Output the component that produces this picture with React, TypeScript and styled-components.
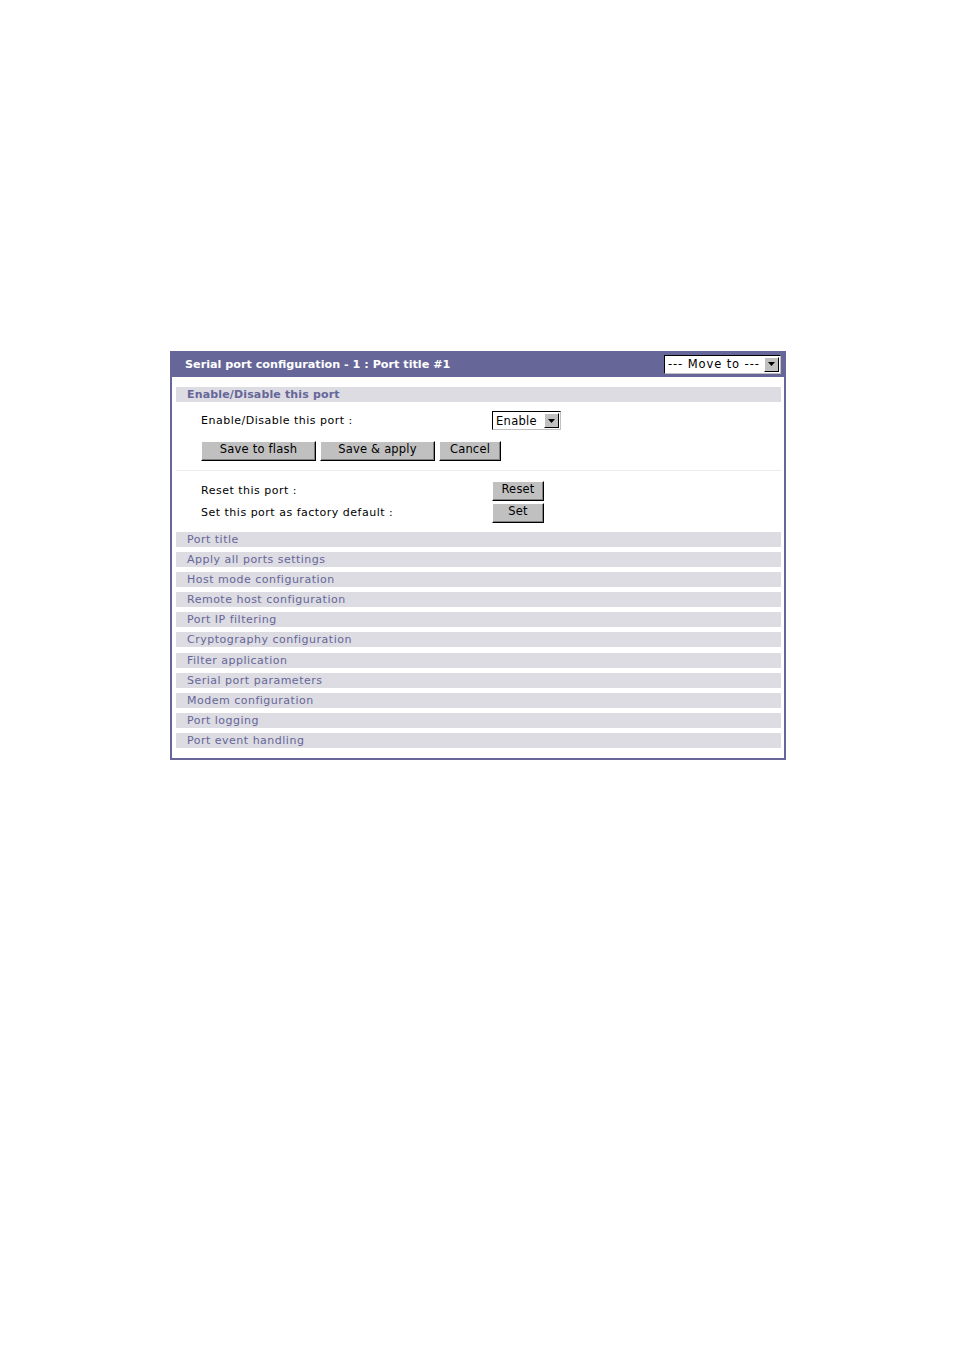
import React from 'react'
import styled, { createGlobalStyle } from 'styled-components'

const GlobalStyle = createGlobalStyle`
  body {
    margin: 0;
    background: #ffffff;
    font-family: "DejaVu Sans", Verdana, sans-serif;
  }
`

const links = [
  'Port title',
  'Apply all ports settings',
  'Host mode configuration',
  'Remote host configuration',
  'Port IP filtering',
  'Cryptography configuration',
  'Filter application',
  'Serial port parameters',
  'Modem configuration',
  'Port logging',
  'Port event handling',
]

const Page = styled.div`
  padding: 351px 0 0 170px;
  min-height: 1000px;
`

const Panel = styled.div`
  width: 612px;
  border: 2px solid #666699;
  border-top: 0;
  background: #ffffff;
`

const Header = styled.div`
  display: flex;
  align-items: center;
  justify-content: space-between;
  height: 26px;
  margin: 0 -2px;
  padding: 0 5px 0 15px;
  background: #666699;
  color: #ffffff;
  font-size: 11.2px;
  font-weight: bold;
`

const Body = styled.div`
  padding: 10px 3px 10px 4px;
`

const SectionBar = styled.div<{ $bold?: boolean }>`
  display: flex;
  align-items: center;
  height: 15px;
  padding-left: 11px;
  background: #dcdce2;
  color: #666699;
  font-size: 11px;
  font-weight: ${(p) => (p.$bold ? 'bold' : 'normal')};
  letter-spacing: ${(p) => (p.$bold ? '0.15px' : '0.5px')};
  white-space: nowrap;
`

const LinkList = styled.div`
  display: flex;
  flex-direction: column;
  gap: 5.1px;
`

const Form = styled.div<{ $top?: number }>`
  padding: ${(p) => p.$top ?? 0}px 0 0 25px;
`

const Row = styled.div<{ $h: number }>`
  display: grid;
  grid-template-columns: 291px auto;
  align-items: center;
  height: ${(p) => p.$h}px;
  font-size: 11px;
  letter-spacing: 0.5px;
  color: #000000;
`

const ButtonRow = styled.div`
  display: flex;
  gap: 4px;
  margin: 11px 0 9px;
`

const Separator = styled.div`
  height: 1px;
  background: #ececec;
  margin-bottom: 9px;
`

const Button = styled.button<{ $w: number; $h?: number }>`
  box-sizing: border-box;
  width: ${(p) => p.$w}px;
  height: ${(p) => p.$h ?? 20}px;
  padding: 0 0 2px;
  background: #c0c0c0;
  border: 1px solid;
  border-color: #ffffff #000000 #000000 #ffffff;
  box-shadow: inset -1px -1px 0 #808080;
  font-family: "DejaVu Sans", Verdana, sans-serif;
  font-size: 11.5px;
  letter-spacing: 0.2px;
  color: #000000;
  line-height: 1;
`

const Select = styled.div<{ $w: number }>`
  box-sizing: border-box;
  display: flex;
  align-items: center;
  justify-content: space-between;
  width: ${(p) => p.$w}px;
  height: 19px;
  background: #ffffff;
  border: 1px solid;
  border-color: #000000 #c0c0c0 #c0c0c0 #000000;
  padding: 0 1px 0 3px;
  color: #000000;
  font-size: 11.5px;
  font-weight: normal;
  letter-spacing: 0.3px;
`

const Dashes = styled.span`
  letter-spacing: 0.9px;
`

const Arrow = styled.span`
  box-sizing: border-box;
  display: flex;
  align-items: center;
  justify-content: center;
  width: 15px;
  height: 15px;
  background: #c0c0c0;
  border: 1px solid;
  border-color: #ffffff #000000 #000000 #ffffff;
`

const Spacer = styled.div<{ $h: number }>`
  height: ${(p) => p.$h}px;
`

const Down = () => (
  <Arrow>
    <svg width="7" height="4" viewBox="0 0 7 4">
      <path d="M0 0h7L3.5 4z" fill="#000" />
    </svg>
  </Arrow>
)

const App: React.FC = () => {
  return (
    <Page>
      <GlobalStyle />
      <Panel>
        <Header>
          <span>Serial port configuration - 1 : Port title #1</span>
          <Select $w={117}>
            <Dashes>--- Move to ---</Dashes>
            <Down />
          </Select>
        </Header>
        <Body>
          <SectionBar $bold>Enable/Disable this port</SectionBar>
          <Form $top={9}>
            <Row $h={19}>
              <span>Enable/Disable this port :</span>
              <Select $w={69}>
                <span>Enable</span>
                <Down />
              </Select>
            </Row>
            <ButtonRow>
              <Button $w={115}>Save to flash</Button>
              <Button $w={115}>Save &amp; apply</Button>
              <Button $w={62}>Cancel</Button>
            </ButtonRow>
          </Form>
          <Separator />
          <Form>
            <Row $h={21}>
              <span>Reset this port :</span>
              <Button $w={52} $h={20}>Reset</Button>
            </Row>
            <Row $h={23}>
              <span>Set this port as factory default :</span>
              <Button $w={52} $h={20}>Set</Button>
            </Row>
          </Form>
          <Spacer $h={8} />
          <LinkList>
            {links.map((l) => (
              <SectionBar key={l}>{l}</SectionBar>
            ))}
          </LinkList>
        </Body>
      </Panel>
    </Page>
  )
}

export default App
